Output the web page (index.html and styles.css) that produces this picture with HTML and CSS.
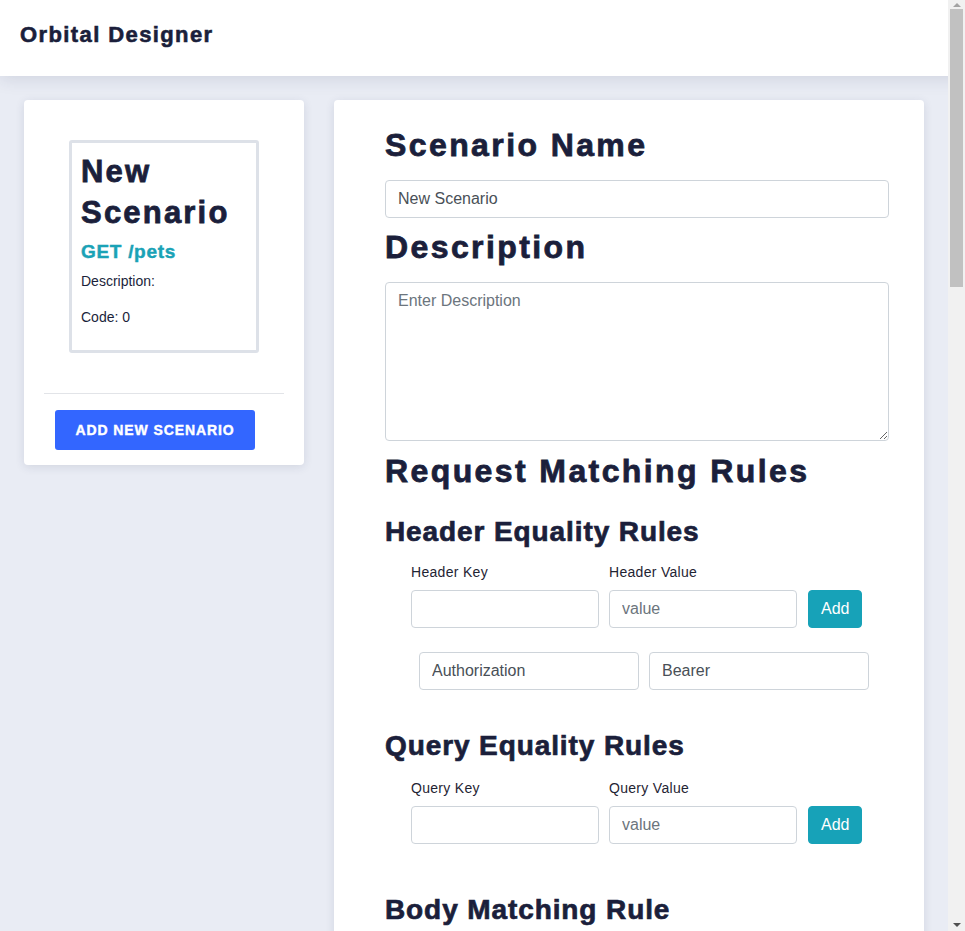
FILE: index.html
```html
<!DOCTYPE html>
<html lang="en">
<head>
<meta charset="utf-8">
<title>Orbital Designer</title>
<link rel="stylesheet" href="styles.css">
</head>
<body>
<header class="topbar">
  <div class="brand">Orbital Designer</div>
</header>
<div class="layout">
  <aside class="sidebar">
    <div class="scenario-list">
      <div class="scenario-card">
        <h1 class="scenario-title">New Scenario</h1>
        <h3 class="scenario-method">GET /pets</h3>
        <p class="scenario-meta">Description:</p>
        <p class="scenario-meta">Code: 0</p>
      </div>
    </div>
    <div class="sidebar-footer">
      <button class="btn-primary" type="button">ADD NEW SCENARIO</button>
    </div>
  </aside>
  <main class="editor">
    <h1 class="section-title">Scenario Name</h1>
    <input class="form-control name-input" type="text" value="New Scenario">
    <h1 class="section-title gap-sm">Description</h1>
    <textarea class="form-control desc-input" placeholder="Enter Description"></textarea>
    <h1 class="section-title gap-xs">Request Matching Rules</h1>

    <section class="rule-group">
      <h2 class="group-title">Header Equality Rules</h2>
      <div class="add-row">
        <label class="field field-key"><span class="field-label">Header Key</span><input class="form-control" type="text"></label>
        <label class="field field-value"><span class="field-label">Header Value</span><input class="form-control" type="text" placeholder="value"></label>
        <button class="btn-add" type="button">Add</button>
      </div>
      <div class="rule-list">
        <div class="rule-item">
          <input class="form-control rule-input" type="text" value="Authorization">
          <input class="form-control rule-input" type="text" value="Bearer">
        </div>
      </div>
    </section>

    <section class="rule-group">
      <h2 class="group-title">Query Equality Rules</h2>
      <div class="add-row add-row-loose">
        <label class="field field-key"><span class="field-label">Query Key</span><input class="form-control" type="text"></label>
        <label class="field field-value"><span class="field-label">Query Value</span><input class="form-control" type="text" placeholder="value"></label>
        <button class="btn-add" type="button">Add</button>
      </div>
      <div class="rule-list"></div>
    </section>

    <section class="rule-group">
      <h2 class="group-title">Body Matching Rule</h2>
    </section>
  </main>
</div>
<div class="scrollbar" aria-hidden="true">
  <span class="sb-arrow sb-up"></span>
  <span class="sb-track"><span class="sb-thumb"></span></span>
  <span class="sb-arrow sb-down"></span>
</div>
</body>
</html>
```

FILE: styles.css
```css
* {
  box-sizing: border-box;
}

html, body {
  margin: 0;
  padding: 0;
}

body {
  background: #e9ecf4;
  font-family: "Liberation Sans", Arial, sans-serif;
  color: #1b1f3b;
}

.topbar {
  position: relative;
  z-index: 2;
  height: 76px;
  background: #ffffff;
  padding: 22px 20px 0;
  box-shadow: 0 3px 16px rgba(40, 50, 90, 0.13);
}

.brand {
  font-size: 22px;
  font-weight: 700;
  letter-spacing: 1.4px;
  color: #1b1f3b;
  -webkit-text-stroke: 0.6px #1b1f3b;
}

.layout {
  display: flex;
  align-items: flex-start;
  gap: 30px;
  padding: 24px;
}

.sidebar {
  width: 280px;
  flex: 0 0 280px;
  background: #ffffff;
  border-radius: 4px;
  box-shadow: 0 2px 10px rgba(40, 50, 90, 0.12);
  padding-top: 40px;
}

.scenario-list {
  display: flex;
  justify-content: center;
}

.scenario-card {
  width: 190px;
  border: 3px solid #dde1e8;
  border-radius: 3px;
  padding: 8px 9px;
}

.scenario-title {
  margin: 0;
  font-size: 31px;
  line-height: 41px;
  font-weight: 700;
  letter-spacing: 2.2px;
  color: #1b1f3b;
  -webkit-text-stroke: 0.8px #1b1f3b;
}

.scenario-method {
  margin: 8px 0 7px;
  font-size: 19px;
  font-weight: 700;
  letter-spacing: 0.7px;
  color: #1aa2b6;
  -webkit-text-stroke: 0.45px #1aa2b6;
}

.scenario-meta {
  margin: 0 0 14px;
  font-size: 14px;
  line-height: 22px;
  color: #1b1f3b;
}

.sidebar-footer {
  margin: 40px 20px 0;
  border-top: 1px solid #e2e4e8;
  padding: 16px 0 15px 11px;
}

.btn-primary {
  display: block;
  width: 200px;
  height: 40px;
  border: none;
  border-radius: 3px;
  background: #3366ff;
  color: #ffffff;
  font-family: "Liberation Sans", Arial, sans-serif;
  font-size: 14px;
  font-weight: 700;
  letter-spacing: 0.9px;
  padding: 0;
  -webkit-text-stroke: 0.4px #ffffff;
}

.editor {
  width: 590px;
  flex: 0 0 590px;
  min-height: 2926px;
  background: #ffffff;
  border-radius: 4px;
  box-shadow: 0 2px 10px rgba(40, 50, 90, 0.12);
  padding: 27px 35px 24px 51px;
}

.section-title {
  margin: 0;
  font-size: 32px;
  line-height: 37px;
  font-weight: 700;
  letter-spacing: 2.4px;
  color: #1b1f3b;
  -webkit-text-stroke: 0.8px #1b1f3b;
}

.gap-sm {
  margin-top: 11px;
}

.gap-xs {
  margin-top: 12px;
}

.form-control {
  display: block;
  width: 100%;
  height: 38px;
  padding: 6px 12px;
  font-family: "Liberation Sans", Arial, sans-serif;
  font-size: 16px;
  line-height: 24px;
  color: #495057;
  background: #ffffff;
  border: 1px solid #ced4da;
  border-radius: 4px;
  outline: none;
}

.form-control::placeholder {
  color: #6c757d;
}

.name-input {
  margin-top: 16px;
}

.desc-input {
  margin-top: 16px;
  height: 159px;
  resize: vertical;
}

.rule-group {
  display: flow-root;
  padding-top: 26px;
}

.group-title {
  margin: 0;
  font-size: 28px;
  line-height: 32px;
  font-weight: 700;
  letter-spacing: 0.9px;
  color: #1b1f3b;
  -webkit-text-stroke: 0.7px #1b1f3b;
}

.add-row {
  display: flex;
  align-items: flex-end;
  margin-top: 16px;
  padding-left: 26px;
}

.add-row-loose {
  margin-top: 18px;
}

.field {
  display: flex;
  flex-direction: column;
  gap: 10px;
}

.field-key {
  width: 188px;
  margin-right: 10px;
}

.field-value {
  width: 188px;
  margin-right: 11px;
}

.field-label {
  font-size: 14px;
  line-height: 16px;
  letter-spacing: 0.3px;
  color: #1f2433;
}

.btn-add {
  height: 38px;
  padding: 0 12px;
  border: 1px solid #17a2b8;
  border-radius: 4px;
  background: #17a2b8;
  color: #ffffff;
  font-family: "Liberation Sans", Arial, sans-serif;
  font-size: 16px;
}

.rule-list {
  padding-top: 24px;
  padding-left: 34px;
}

.rule-item {
  display: flex;
  gap: 10px;
  margin-bottom: 14px;
}

.rule-input {
  width: 220px;
}

/* decorative classic scrollbar drawn over the right edge */
.scrollbar {
  position: fixed;
  top: 0;
  right: 0;
  bottom: 0;
  z-index: 10;
  width: 17px;
  background: #f1f1f1;
  display: flex;
  flex-direction: column;
  align-items: center;
}

.sb-arrow {
  width: 0;
  height: 0;
  border-left: 4px solid transparent;
  border-right: 4px solid transparent;
}

.sb-up {
  flex: 0 0 4px;
  margin-top: 3px;
  border-bottom: 4px solid #a3a3a3;
}

.sb-down {
  flex: 0 0 4px;
  margin-bottom: 4px;
  border-top: 4px solid #505050;
}

.sb-track {
  flex: 1;
  width: 100%;
  padding: 2px 2px 0;
}

.sb-thumb {
  display: block;
  height: 278px;
  background: #c1c1c1;
}
```
